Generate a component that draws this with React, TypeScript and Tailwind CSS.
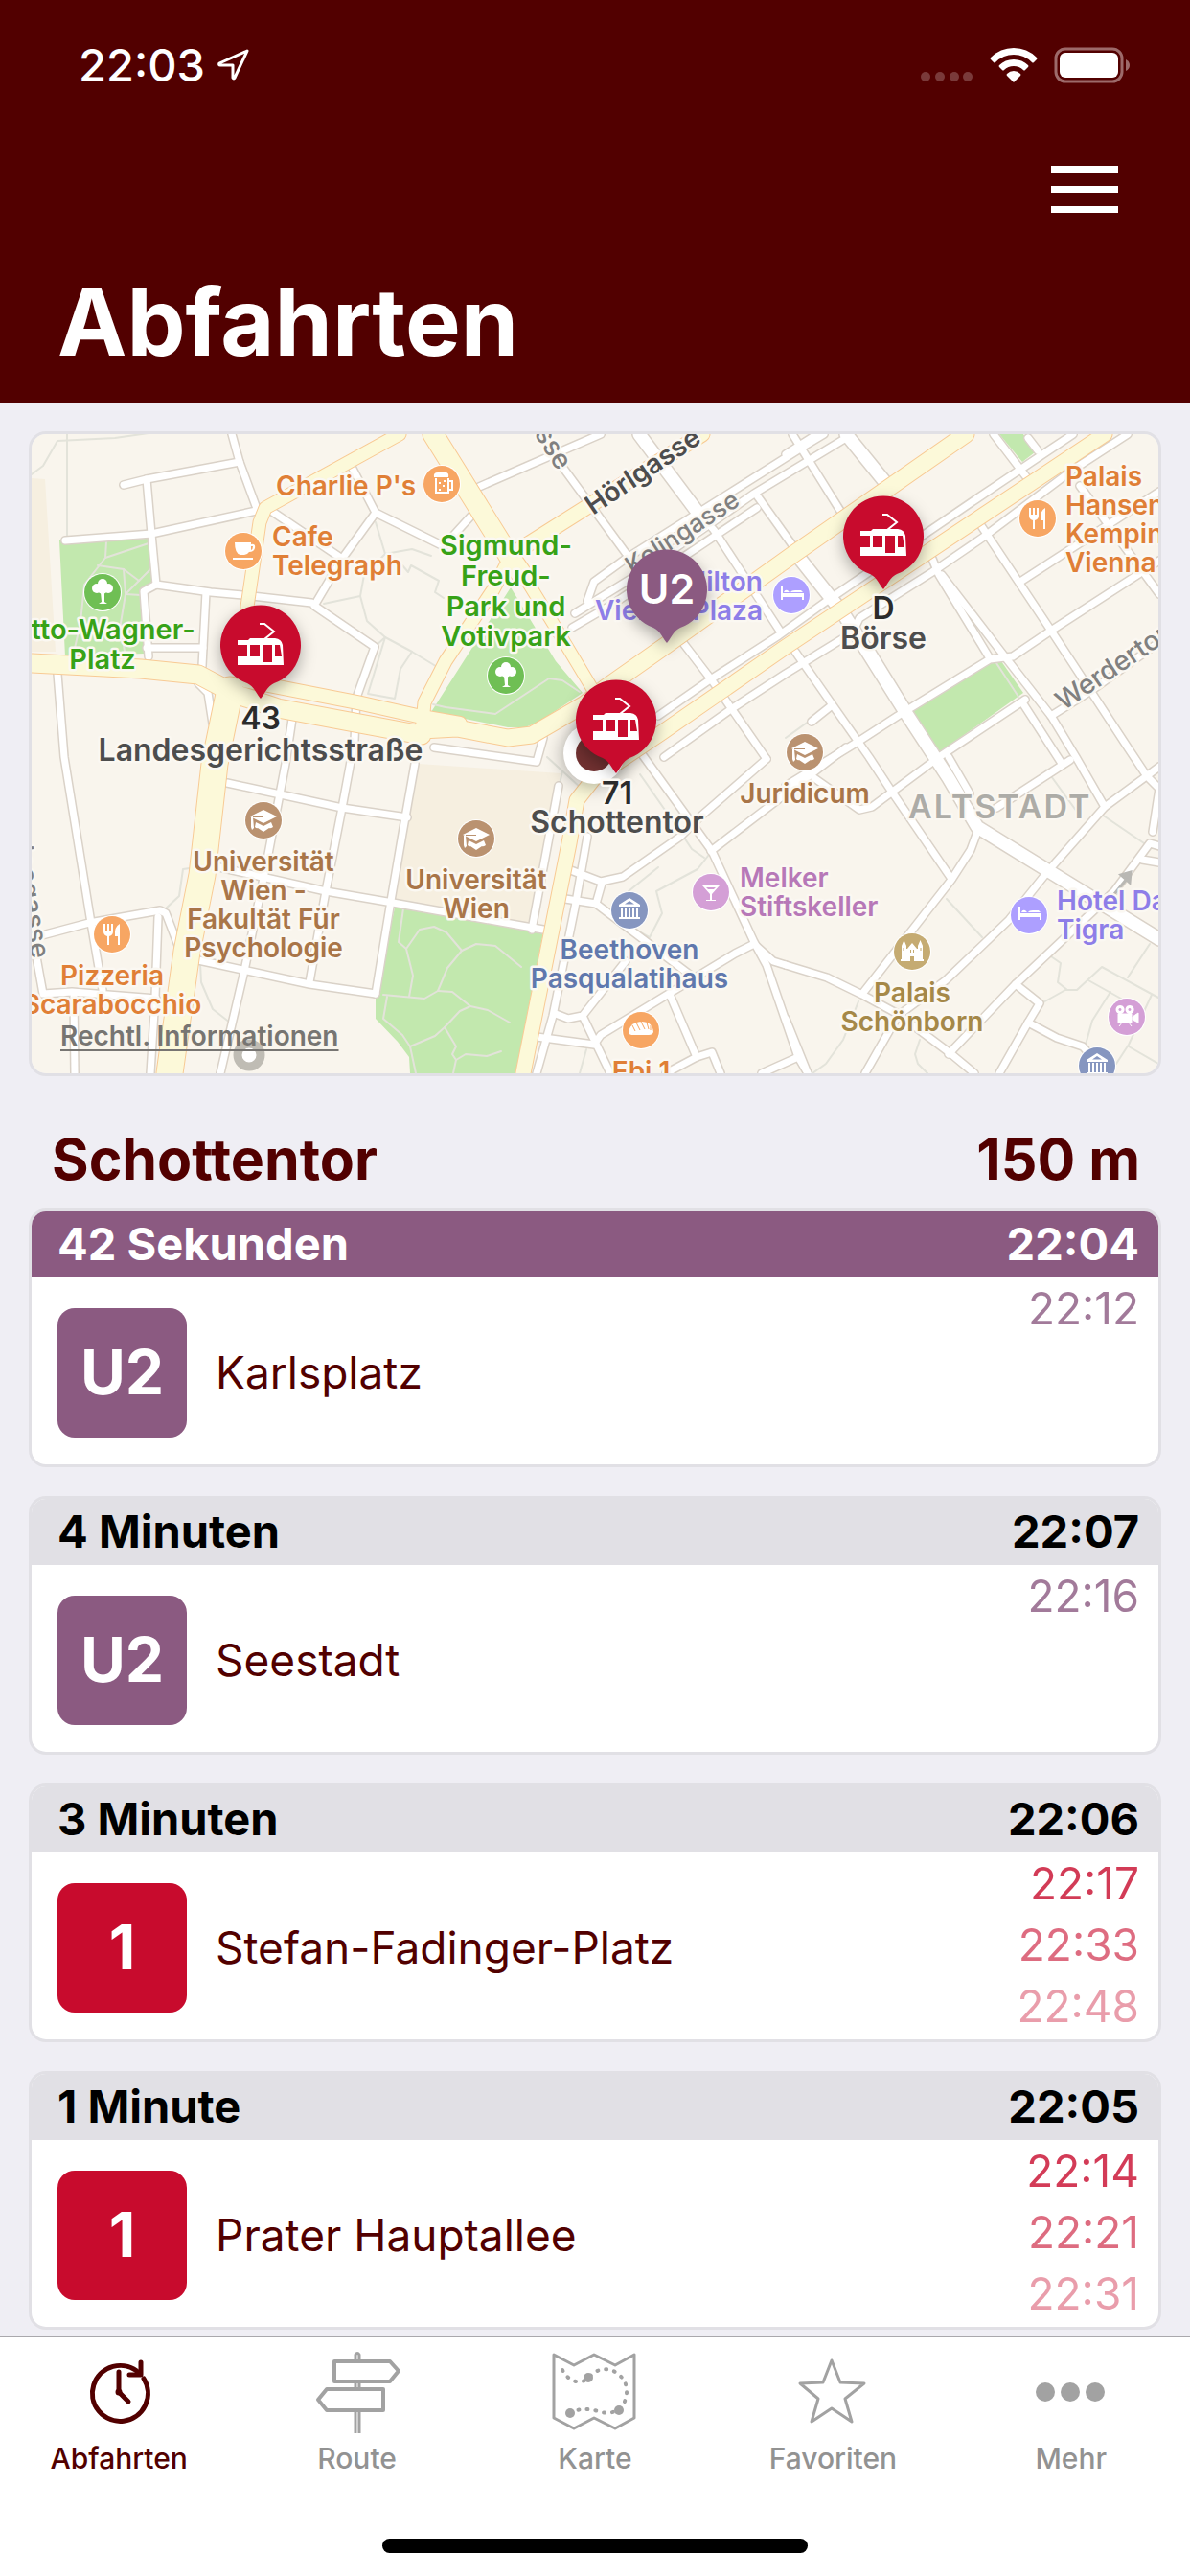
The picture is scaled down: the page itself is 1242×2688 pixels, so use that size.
import React from "react";

type Departure = {
  wait: string;
  time: string;
  line: string;
  target: string;
  next: string[];
  kind: "metro" | "tram";
  soon?: boolean;
};

const departures: Departure[] = [
  { wait: "42 Sekunden", time: "22:04", line: "U2", target: "Karlsplatz", next: ["22:12"], kind: "metro", soon: true },
  { wait: "4 Minuten", time: "22:07", line: "U2", target: "Seestadt", next: ["22:16"], kind: "metro" },
  { wait: "3 Minuten", time: "22:06", line: "1", target: "Stefan-Fadinger-Platz", next: ["22:17", "22:33", "22:48"], kind: "tram" },
  { wait: "1 Minute", time: "22:05", line: "1", target: "Prater Hauptallee", next: ["22:14", "22:21", "22:31"], kind: "tram" },
];

const nextOpacity = ["opacity-80", "opacity-60", "opacity-40"];

// --- map data ---

const parks = [
  "62,564 156,562 160,607 148,617 150,682 68,685",
  "533,613 450,743 530,759 548,759 563,753 608,723 580,690",
  "412,947 567,973 538,1120 428,1120 427,1103 415,1087 392,1063 392,1040",
  "1043,453 1068,453 1080,472 1067,482",
  "948,744 1037,689 1045,690 1068,723 978,787",
];

const blocks = ["33,499 47,500 58,680 33,680", "437,797 585,807 555,965 412,940"];

const footpaths = [
  "33,495 45,486 60,460 120,457 155,452",
  "70,453 70,560",
  "111,565 110,582 88,610 84,650 76,685",
  "155,567 110,582",
  "102,590 129,594 145,606 158,593",
  "129,594 131,620 126,650 130,680",
  "145,606 131,620 147,621",
  "392,545 402,578 380,600 376,622 338,630",
  "376,622 383,648 402,665 391,675",
  "402,578 430,573 450,580",
  "402,665 430,680 458,697",
  "430,680 418,698 412,729 384,724 402,665",
  "420,590 426,597 429,590 458,606 454,618 463,624",
  "452,735 465,738 517,745 573,708 587,710 605,722",
  "424,990 438,970 453,967 466,973 482,992 497,985 517,987 544,1009",
  "482,992 467,1010 457,1034 443,1042 400,1038",
  "421,948 416,983 424,990 431,1018 427,1040",
  "457,1034 472,1035 491,1050 509,1054 532,1067",
  "491,1050 480,1055 464,1072 454,1081 428,1092 434,1120",
  "464,1072 476,1092 472,1100 476,1106 486,1100 508,1102 523,1097",
  "476,1106 473,1120",
  "404,1040 400,1063 420,1080 428,1092",
  "173,948 187,935 191,907 205,905",
  "209,1005 210,1025 222,1053 240,1067",
  "571,790 606,822",
  "583,822 587,805",
  "668,808 710,868 722,886 735,895",
  "687,905 656,930",
  "743,888 728,907 685,930 691,953 678,978 660,968",
  "612,1095 605,1120",
  "1092,803 1124,847",
  "1150,850 1197,882",
  "988,938 1025,978",
  "896,1045 880,1085 862,1110 848,1120",
  "960,1085 955,1100 958,1110 968,1120",
  "1087,1047 1112,1033 1124,1033 1150,1009 1209,1041",
  "1094,996 1107,1005 1104,1025 1114,1033",
  "1136,1023 1170,1042",
  "1200,985 1177,1020",
  "1159,1035 1140,1065 1133,1090",
  "1202,1038 1178,1090 1165,1110",
  "1178,1092 1209,1110",
  "820,770 845,752",
  "1040,692 1063,727",
];

const streets = [
  "242,453 250,482 267,528",
  "129,506 153,500 250,482",
  "153,500 158,557 163,610",
  "68,564 158,557 272,532",
  "163,610 220,618 263,622 325,629",
  "163,610 150,617 155,685",
  "215,618 211,695",
  "153,676 212,676",
  "283,533 357,583",
  "367,487 392,535 357,583 328,632 391,675 372,728 370,773 357,843 340,930 323,1025",
  "392,535 463,570 493,537",
  "60,703 67,790 95,963 107,1033",
  "207,713 217,723 222,755",
  "305,750 298,797 277,907 255,1013 230,1120",
  "627,453 500,508",
  "587,487 653,577",
  "727,533 745,553 815,660",
  "613,627 620,607 653,583 840,465 860,453",
  "600,640 660,603 787,515 883,457",
  "597,655 640,630 790,530",
  "790,517 830,573",
  "687,747 740,710 813,663 863,627 1020,520 1087,475 1120,453",
  "693,790 763,740 820,703 890,660 897,645 973,597 1027,560 1120,490 1177,453",
  "710,667 743,710 800,792",
  "827,453 877,533",
  "853,453 820,474",
  "973,583 980,600 1033,687",
  "983,600 1047,683 1097,747 1123,790 1153,842",
  "1023,547 1063,607 1097,658 1177,780 1197,810 1210,823 1203,868",
  "1065,607 1210,513",
  "820,820 897,773 937,747 1033,688 1057,685 1097,658 1187,600 1210,585",
  "850,812 897,845 910,842 980,790 1070,730",
  "1067,733 1107,795",
  "910,680 947,740",
  "830,680 867,733 907,790 930,825 993,917",
  "847,753 867,737",
  "1037,453 1073,500",
  "1073,457 1083,470",
  "1127,507 1210,620",
  "1097,747 1140,720 1210,670",
  "1040,843 1117,793",
  "1210,800 1153,842 1093,910 1053,960 987,1023 937,1060 903,1120",
  "990,790 1012,828",
  "1020,868 1013,887 993,918 900,1037",
  "1210,883 1200,880 1163,930 1060,1027 990,1100",
  "820,1007 863,1020 900,1038 937,1058 993,1100 1017,1120",
  "1060,1027 1085,1047 1073,1067 1043,1120",
  "1073,1067 1103,1083 1130,1092 1140,1103",
  "1192,897 1210,900",
  "453,780 560,795 567,770",
  "433,797 420,870 408,940 392,1037",
  "220,903 340,930 410,942 567,970",
  "237,817 357,843 425,853",
  "207,1002 323,1027 392,1037",
  "583,820 555,970",
  "613,873 600,947 577,1060 560,1120",
  "593,907 627,920 650,915 710,873 730,853 800,792",
  "742,888 840,813 883,780",
  "670,787 743,888 787,983 800,1007 833,1103 843,1120",
  "628,922 622,943 590,938",
  "622,943 720,1017",
  "820,1007 807,1003 787,985 767,995 627,1080 620,1090 560,1082",
  "653,1003 608,1060 593,1063 580,1058",
  "608,1060 637,1120",
  "700,1040 727,1103 743,1098 752,1120",
  "727,1103 695,1120",
  "795,1120 833,1103",
  "820,1063 843,1120",
  "40,977 93,963 167,950 173,953 190,997",
  "165,957 162,1040 157,1120",
  "37,993 45,1037 75,1035 163,1042",
  "77,1040 78,1120",
];

const wideStreets = [
  "667,453 727,533",
  "883,453 927,507",
  "830,577 880,640 943,740 990,812 1020,863 1093,908 1210,980",
];

const mainRoads = [
  { w: 13, p: "417,453 277,530 271,545 258,633 255,700" },
  { w: 19, p: "33,692 147,698 207,704 245,724 290,739 440,767" },
  { w: 14, p: "255,710 373,733 440,748 480,755" },
  { w: 27, p: "240,720 224,797 211,913 195,993 177,1120" },
  { w: 21, p: "452,453 533,583 545,600" },
  { w: 12, p: "540,590 580,655 622,725" },
  { w: 13, p: "528,590 515,615 465,690 443,733 440,765" },
  { w: 17, p: "440,762 477,760 530,770 555,767 610,735 633,717 697,672 830,577 1008,453" },
  { w: 15, p: "543,573 733,453" },
  { w: 15, p: "1153,453 820,675 690,765 620,812 602,835 594,880 574,980 546,1120" },
];

type Label = { x: number; y: number; text: string; color: string; size?: number; anchor?: "start" | "middle" | "end"; weight?: number; rotate?: number };

const ORANGE = "#e07f36";
const GREEN = "#37a217";
const BROWN = "#a97548";
const VIOLET = "#8e7ee8";
const PINK = "#b778b8";
const BLUE = "#6078ad";
const GOLD = "#a58848";
const GREY = "#808080";

const labels: Label[] = [
  { x: 288, y: 517, text: "Charlie P's", color: ORANGE, anchor: "start" },
  { x: 284, y: 570, text: "Cafe", color: ORANGE, anchor: "start" },
  { x: 284, y: 600, text: "Telegraph", color: ORANGE, anchor: "start" },
  { x: 107, y: 667, text: "Otto-Wagner-", color: GREEN, size: 29 },
  { x: 107, y: 698, text: "Platz", color: GREEN, size: 29 },
  { x: 528, y: 579, text: "Sigmund-", color: GREEN, size: 29 },
  { x: 528, y: 611, text: "Freud-", color: GREEN, size: 29 },
  { x: 528, y: 643, text: "Park und", color: GREEN, size: 29 },
  { x: 528, y: 674, text: "Votivpark", color: GREEN, size: 29 },
  { x: 117, y: 1028, text: "Pizzeria", color: ORANGE },
  { x: 117, y: 1058, text: "Scarabocchio", color: ORANGE },
  { x: 275, y: 909, text: "Universität", color: BROWN },
  { x: 275, y: 939, text: "Wien -", color: BROWN },
  { x: 275, y: 969, text: "Fakultät Für", color: BROWN },
  { x: 275, y: 999, text: "Psychologie", color: BROWN },
  { x: 497, y: 928, text: "Universität", color: BROWN },
  { x: 497, y: 958, text: "Wien", color: BROWN },
  { x: 840, y: 838, text: "Juridicum", color: BROWN },
  { x: 772, y: 926, text: "Melker", color: PINK, anchor: "start" },
  { x: 772, y: 956, text: "Stiftskeller", color: PINK, anchor: "start" },
  { x: 657, y: 1001, text: "Beethoven", color: BLUE },
  { x: 657, y: 1031, text: "Pasqualatihaus", color: BLUE },
  { x: 952, y: 1046, text: "Palais", color: GOLD },
  { x: 952, y: 1076, text: "Schönborn", color: GOLD },
  { x: 1103, y: 950, text: "Hotel Das", color: VIOLET, anchor: "start" },
  { x: 1103, y: 980, text: "Tigra", color: VIOLET, anchor: "start" },
  { x: 669, y: 1128, text: "Ebi 1", color: ORANGE },
  { x: 1112, y: 507, text: "Palais", color: ORANGE, anchor: "start" },
  { x: 1112, y: 537, text: "Hansen", color: ORANGE, anchor: "start" },
  { x: 1112, y: 567, text: "Kempinski", color: ORANGE, anchor: "start" },
  { x: 1112, y: 597, text: "Vienna", color: ORANGE, anchor: "start" },
  { x: 796, y: 617, text: "Hilton", color: VIOLET, anchor: "end" },
  { x: 796, y: 647, text: "Vienna Plaza", color: VIOLET, anchor: "end" },
  { x: 619, y: 538, text: "Hörlgasse", color: "#4d4d4d", size: 28, rotate: -34, anchor: "start" },
  { x: 660, y: 600, text: "Kolingasse", color: GREY, size: 26, weight: 500, rotate: -33, anchor: "start" },
  { x: 582, y: 492, text: "Wasagasse", color: GREY, weight: 500, rotate: 58, anchor: "end" },
  { x: 1110, y: 742, text: "Werdertorgasse", color: GREY, weight: 500, rotate: -34, anchor: "start" },
  { x: 33, y: 1001, text: "Landesgasse", color: GREY, weight: 500, rotate: 81, anchor: "end" },
];

const stopLabels: Label[] = [
  { x: 272, y: 761, text: "43", color: "#2b2b2b" },
  { x: 272, y: 794, text: "Landesgerichtsstraße", color: "#4d4d4d" },
  { x: 922, y: 646, text: "D", color: "#2b2b2b" },
  { x: 922, y: 677, text: "Börse", color: "#4d4d4d" },
  { x: 644, y: 839, text: "71", color: "#2b2b2b" },
  { x: 644, y: 869, text: "Schottentor", color: "#4d4d4d" },
];

const glyphs: Record<string, React.ReactNode> = {
  beer: (
    <g fill="none" stroke="#fff" strokeWidth="2">
      <path d="M-6 -6V9H7V-6" />
      <path d="M7 -3H11V6H7" />
      <path d="M-8 4V-7Q-9 -12 -4 -12Q0 -14 4 -12Q8 -12 7 -7H-8" fill="#fff" stroke="none" />
      <path d="M-2 -2V0M2 1V3M-2 5V7M3 -4V-2" />
    </g>
  ),
  cup: (
    <g fill="#fff">
      <path d="M-9 -9H8V-7Q13 -8 12 -3Q11 1 6 1Q4 4 1 4H-3Q-9 3 -9 -9ZM8 -5V-1Q10 -2 10 -5Z" fillRule="evenodd" />
      <rect x="-11" y="7" width="21" height="2" />
    </g>
  ),
  tree: (
    <g fill="#fff">
      <circle cx="0" cy="-9" r="5" />
      <circle cx="-6" cy="-4" r="5" />
      <circle cx="6" cy="-4" r="5" />
      <circle cx="0" cy="-3" r="5" />
      <path d="M-2 0H2V10L5 12H-4L-1 10Z" />
    </g>
  ),
  grad: (
    <g fill="#fff">
      <path d="M-14 -4L0 -11L14 -4L0 3Z" />
      <path d="M-8 2L0 6L8 2L10 7Q7 9 6 8L0 12L-6 8Q-7 9 -9 7Z" />
      <path d="M-13 -3H-11L-10 8L-12 10L-13 7Z" />
      <path d="M-11 -3.5H0" stroke="#ba9270" strokeWidth="1" />
    </g>
  ),
  food: (
    <g fill="#fff">
      <path d="M-9 -11H-7V-4H-5V-11H-3V-4H-1V-11H1V-3Q1 1 -3 2V11H-5V2Q-9 1 -9 -3Z" />
      <path d="M8 -11V11H6V2H3Q2 -8 8 -11Z" />
    </g>
  ),
  bed: (
    <g fill="#fff">
      <path d="M-11 -9H-9V-2H13V5H11V2H-9V5H-11Z" />
      <path d="M-8 -3Q-7 -6 -4 -5L-2 -3ZM-1 -3Q0 -5 4 -5H10L12 -3Z" />
    </g>
  ),
  museum: (
    <g fill="#fff">
      <path d="M0 -13L11 -6V-4H-11V-6ZM0 -10L-5 -6.5H5Z" fillRule="evenodd" />
      <path d="M-9 -3H-7V7H-9ZM-5 -3H-3V7H-5ZM-1 -3H1V7H-1ZM3 -3H5V7H3ZM7 -3H9V7H7ZM-11 7H11V9H-11Z" />
    </g>
  ),
  cocktail: <path d="M-9 -7H9L1 2V8H5V9H-5V8H-1V2ZM-5 -5H5L3 -3H-3Z" fill="#fff" fillRule="evenodd" />,
  croissant: (
    <g>
      <path d="M-13 3Q-12 -8 0 -9Q12 -9 13 2Q12 5 8 5H-8Q-12 5 -13 3Z" fill="#fff" />
      <path d="M-9 -5L-6 1M-5 -8L-1 0M0 -9L4 -1M6 -8L8 -1M10 -5L10 0" stroke="#f7a663" strokeWidth="1" />
    </g>
  ),
  castle: (
    <g fill="#fff">
      <path d="M-11 -6L-8.500 -12L-6 -6V-3H-5L0 -9L5 -3H6V-6L8.500 -12L11 -6V8H12V10H2V5H-2V10H-12V8H-11Z" />
      <path d="M-9 -4V-1M-1.500 -2V1M1.500 -2V1M9 -4V-1" stroke="#c5ab72" strokeWidth="1" />
    </g>
  ),
  camera: (
    <g fill="#fff">
      <path d="M-7 -12a4.500 4.500 0 1 0 .1 0ZM-7 -9a1.500 1.500 0 1 1 -.1 0ZM3 -12a4.500 4.500 0 1 0 .1 0ZM3 -9a1.500 1.500 0 1 1 -.1 0Z" fillRule="evenodd" />
      <path d="M-9 -3H5V6H-9ZM6 0L12 -4V6L6 3ZM-5 6L-8 10M2 6L5 10" stroke="#fff" strokeWidth="1" />
    </g>
  ),
};

const pois = [
  { x: 461, y: 505, fill: "#f7a663", glyph: "beer" },
  { x: 254, y: 575, fill: "#f7a663", glyph: "cup" },
  { x: 107, y: 618, fill: "#6fbf54", glyph: "tree" },
  { x: 528, y: 705, fill: "#6fbf54", glyph: "tree" },
  { x: 275, y: 856, fill: "#ba9270", glyph: "grad" },
  { x: 497, y: 875, fill: "#ba9270", glyph: "grad" },
  { x: 840, y: 785, fill: "#ba9270", glyph: "grad" },
  { x: 117, y: 975, fill: "#f7a663", glyph: "food" },
  { x: 1083, y: 541, fill: "#f7a663", glyph: "food" },
  { x: 826, y: 621, fill: "#ad9fff", glyph: "bed" },
  { x: 1074, y: 955, fill: "#ad9fff", glyph: "bed" },
  { x: 657, y: 950, fill: "#8696c0", glyph: "museum" },
  { x: 1145, y: 1112, fill: "#8696c0", glyph: "museum" },
  { x: 742, y: 931, fill: "#d49fd6", glyph: "cocktail" },
  { x: 669, y: 1075, fill: "#f7a663", glyph: "croissant" },
  { x: 952, y: 993, fill: "#c5ab72", glyph: "castle" },
  { x: 1176, y: 1061, fill: "#d49fd6", glyph: "camera" },
];

function MapText({ label, size }: { label: Label; size: number }) {
  return (
    <text
      x={label.x}
      y={label.y}
      fill={label.color}
      fontSize={label.size ?? size}
      fontWeight={label.weight ?? 600}
      textAnchor={label.anchor ?? "middle"}
      transform={label.rotate ? `rotate(${label.rotate} ${label.x} ${label.y})` : undefined}
      stroke="#fbf8f2"
      strokeWidth="5"
      strokeLinejoin="round"
      paintOrder="stroke"
    >
      {label.text}
    </text>
  );
}

function Pin({ x, y, color, children }: { x: number; y: number; color: string; children: React.ReactNode }) {
  return (
    <g transform={`translate(${x} ${y})`}>
      <path
        d="M0 57C-3 54 -7 44 -14 41A42 42 0 1 1 14 41C7 44 3 54 0 57Z"
        fill={color}
        className="drop-shadow-[0_6px_8px_rgba(0,0,0,0.3)]"
      />
      {children}
    </g>
  );
}

function Tram() {
  return (
    <g>
      <path d="M-24 -4H-13L-11 -6H15Q22 -5 23 1L24 22H-24Z" fill="#fff" />
      <path d="M-24 1H-14V13H-24ZM-11 1H-1V13H-11ZM2 1H12V19H2ZM15 1H20L22 13H15Z" fill="#c80b2d" />
      <path d="M-1 -21H4L14 -13L4 -5" fill="none" stroke="#fff" strokeWidth="2" />
    </g>
  );
}

function StationMap() {
  return (
    <svg viewBox="33 453 1176 667" preserveAspectRatio="xMidYMid slice" className="block w-full h-full" role="img" aria-label="Karte">
      <rect x="0" y="400" width="1242" height="800" fill="#f9f5ed" />
      {blocks.map((p) => <polygon key={p} points={p} fill="#f6efe0" />)}
      {parks.map((p) => <polygon key={p} points={p} fill="#c2e8ae" />)}
      <g fill="none" strokeLinejoin="round" strokeLinecap="round">
        {footpaths.map((p) => <polyline key={p} points={p} stroke="#e3e3da" strokeWidth="2" />)}
        {streets.map((p) => <polyline key={p} points={p} stroke="#dad2c8" strokeWidth="10" />)}
        {wideStreets.map((p) => <polyline key={p} points={p} stroke="#dad2c8" strokeWidth="16" />)}
        {streets.map((p) => <polyline key={p} points={p} stroke="#fff" strokeWidth="7" />)}
        {wideStreets.map((p) => <polyline key={p} points={p} stroke="#fff" strokeWidth="13" />)}
        {mainRoads.map((r) => <polyline key={r.p} points={r.p} stroke="#f8ca94" strokeWidth={r.w + 2} />)}
        {mainRoads.map((r) => <polyline key={r.p} points={r.p} stroke="#fcf9d9" strokeWidth={r.w} />)}
      </g>
      <path d="M1163 933L1176 917M1170 913L1180 910L1179 921Z" fill="#b9b8b4" stroke="#b9b8b4" strokeWidth="3" />
      <circle cx="260" cy="1101" r="12" fill="#fff" stroke="#bfbcb4" strokeWidth="9" />

      {labels.map((l) => <MapText key={l.text + l.x + l.y} label={l} size={28} />)}
      <text x="948" y="854" fill="#adaca7" fontSize="34" fontWeight="600" className="tracking-[2px]" stroke="#fbf8f2" strokeWidth="4" paintOrder="stroke">ALTSTADT</text>

      {pois.map((p) => (
        <g key={`${p.x}-${p.y}`} transform={`translate(${p.x} ${p.y})`}>
          <circle r="20" fill="#fff" />
          <circle r="19" fill={p.fill} />
          {glyphs[p.glyph]}
        </g>
      ))}

      <Pin x={696} y={614} color="#8b5a81">
        <text y="16" textAnchor="middle" fill="#fff" fontSize="43" fontWeight="600">U2</text>
      </Pin>
      <Pin x={922} y={558} color="#c80b2d"><Tram /></Pin>
      <Pin x={272} y={672} color="#c80b2d"><Tram /></Pin>
      <circle cx="620" cy="786" r="32" fill="#fff" className="drop-shadow-[0_2px_10px_rgba(0,0,0,0.35)]" />
      <circle cx="620" cy="786" r="19" fill="#713131" />
      <Pin x={643} y={750} color="#c80b2d"><Tram /></Pin>
      {stopLabels.map((l) => <MapText key={l.text} label={l} size={32} />)}
    </svg>
  );
}

function StatusBar() {
  return (
    <div className="h-[135px] flex items-center justify-between pl-[82px] pr-[62px]">
      <div className="flex items-center gap-3">
        <span className="text-[47px] font-medium leading-none">22:03</span>
        <svg width="34" height="34" viewBox="0 0 34 34" fill="none" stroke="#fff" strokeWidth="3" strokeLinejoin="round">
          <path d="M32 2L3 15Q2 17 4 17H17V30Q18 32 19 30Z" />
        </svg>
      </div>
      <div className="flex items-center gap-[17px]">
        <svg width="56" height="38" viewBox="0 0 56 38" fill="#7a3a3a">
          <circle cx="6" cy="31" r="5" />
          <circle cx="21" cy="31" r="5" />
          <circle cx="36" cy="31" r="5" />
          <circle cx="50" cy="31" r="5" />
        </svg>
        <svg width="50" height="38" viewBox="0 0 50 38" fill="#fff">
          <path d="M25 1Q39 1 49 11Q50 12 49 13L46 16Q45 17 44 16Q36 8 25 8Q14 8 6 16Q5 17 4 16L1 13Q0 12 1 11Q11 1 25 1Z" />
          <path d="M25 13Q34 13 40 19Q41 20 40 21L37 24Q36 25 35 24Q31 20 25 20Q19 20 15 24Q14 25 13 24L10 21Q9 20 10 19Q16 13 25 13Z" />
          <path d="M25 25Q29 25 32 28Q33 29 32 30L25 37L18 30Q17 29 18 28Q21 25 25 25Z" />
        </svg>
        <svg width="80" height="38" viewBox="0 0 80 38">
          <rect x="2" y="2" width="69" height="34" rx="10" fill="none" stroke="#9d6a6a" strokeWidth="3" />
          <rect x="6" y="6" width="61" height="26" rx="6" fill="#fff" />
          <path d="M75 13Q79 15 79 19T75 25Z" fill="#9d6a6a" />
        </svg>
      </div>
    </div>
  );
}

function DepartureCard({ dep }: { dep: Departure }) {
  const metro = dep.kind === "metro";
  return (
    <li className="border-[3px] border-[#e1e0e5] rounded-[18px] bg-white overflow-hidden">
      <div className={`flex items-center justify-between h-[69px] pb-[3px] pl-[27px] pr-5 text-[47px] font-bold leading-none ${dep.soon ? "bg-[#8b5a81] text-white" : "bg-[#e1e0e5] text-black"}`}>
        <span>{dep.wait}</span>
        <time>{dep.time}</time>
      </div>
      <div className="flex h-[195px] pl-[27px] pr-5">
        <div className="flex flex-1 items-center gap-[30px] pt-[3px]">
          <span className={`flex items-center justify-center w-[135px] h-[135px] rounded-[18px] text-white text-[64px] font-bold ${metro ? "bg-[#8b5a81]" : "bg-[#c80b2d]"}`}>
            {dep.line}
          </span>
          <span className="text-[46px] text-[#520000]">{dep.target}</span>
        </div>
        <div className={`flex flex-col items-end text-[46px] leading-[64px] ${metro ? "text-[#8b5a81]" : "text-[#c80b2d]"}`}>
          {dep.next.map((t, i) => (
            <time key={t} className={nextOpacity[i]}>{t}</time>
          ))}
        </div>
      </div>
    </li>
  );
}

const tabs = [
  {
    name: "Abfahrten",
    icon: (
      <g fill="none" strokeWidth="5" strokeLinecap="round" strokeLinejoin="round">
        <path d="M76 29A29 29 0 1 1 71 23" />
        <path d="M73 12V25H61" />
        <path d="M50 22V43L60 53" />
        <circle cx="50" cy="43" r="1" />
      </g>
    ),
  },
  {
    name: "Route",
    icon: (
      <g fill="none" strokeWidth="4" strokeLinejoin="round">
        <path d="M26 11H84L93 21L84 32H26Z" />
        <path d="M77 40H18L9 51L18 62H77Z" />
        <path d="M48 11V4Q50 1 52 4V11M48 32V40M52 32V40M48 62V86M52 62V86" strokeWidth="3" />
      </g>
    ),
  },
  {
    name: "Karte",
    icon: (
      <g fill="none" strokeWidth="3" strokeLinejoin="round" strokeLinecap="round">
        <path d="M7 4L28 15L49 4L71 15L91 4V70L71 81L49 70L28 81L7 70Z" />
        <path d="M16 20Q24 34 36 32Q42 31 48 23Q62 15 74 24Q84 32 83 44Q82 55 75 62Q65 66 56 64Q40 58 24 64" strokeWidth="4" strokeDasharray="1 8" />
        <g fill="currentColor" stroke="none">
          <circle cx="43" cy="28" r="5" />
          <circle cx="24" cy="65" r="5" />
          <circle cx="75" cy="62" r="5" />
        </g>
      </g>
    ),
  },
  {
    name: "Favoriten",
    icon: <path d="M49 10L58 33L83 34L63 50L70 74L49 60L28 74L35 50L16 34L40 33Z" fill="none" strokeWidth="3" strokeLinejoin="round" />,
  },
  {
    name: "Mehr",
    icon: (
      <g fill="currentColor" stroke="none">
        <circle cx="23" cy="43" r="10" />
        <circle cx="49" cy="43" r="10" />
        <circle cx="75" cy="43" r="10" />
      </g>
    ),
  },
];

export default function App() {
  return (
    <div className="min-h-screen flex flex-col bg-[#efeef4] font-['Inter',sans-serif]">
      <header className="bg-[#520000] text-white">
        <StatusBar />
        <div className="flex items-center justify-end h-[124px] pr-[75px]">
          <button aria-label="Menü" className="flex flex-col gap-[14px]">
            <span className="block w-[70px] h-[7px] bg-white" />
            <span className="block w-[70px] h-[7px] bg-white" />
            <span className="block w-[70px] h-[7px] bg-white" />
          </button>
        </div>
        <h1 className="pt-[17px] pb-6 px-[60px] text-[97px] font-bold leading-[120px]">Abfahrten</h1>
      </header>

      <main className="flex-1 px-[30px] pt-[30px] pb-[7px]">
        <section className="relative h-[673px] border-[3px] border-[#e1e0e5] rounded-[18px] overflow-hidden">
          <StationMap />
          <a href="#legal" className="absolute left-[30px] bottom-[21px] text-[28px] leading-[36px] font-semibold text-[#777572] underline decoration-2 underline-offset-4">
            Rechtl. Informationen
          </a>
        </section>

        <div className="flex items-center justify-between h-[138px] pt-9 pl-6 pr-[22px] text-[59px] font-bold text-[#520000]">
          <h2>Schottentor</h2>
          <span>150 m</span>
        </div>

        <ul className="flex flex-col gap-[30px]">
          {departures.map((dep) => (
            <DepartureCard key={dep.target} dep={dep} />
          ))}
        </ul>
      </main>

      <nav className="sticky bottom-0 bg-white border-t border-[#a9a8ac] pt-[14px] pb-6">
        <div className="grid grid-cols-5">
          {tabs.map((tab, i) => (
            <button key={tab.name} className={`flex flex-col items-center gap-[6px] ${i === 0 ? "text-[#520000]" : "text-[#a2a2a2]"}`}>
              <svg width="100" height="86" viewBox="0 0 100 86" stroke="currentColor">{tab.icon}</svg>
              <span className={`text-[30px] leading-[40px] font-medium ${i === 0 ? "" : "text-[#929292]"}`}>{tab.name}</span>
            </button>
          ))}
        </div>
        <div className="w-[444px] h-[15px] mt-16 mx-auto rounded-full bg-black" />
      </nav>
    </div>
  );
}
